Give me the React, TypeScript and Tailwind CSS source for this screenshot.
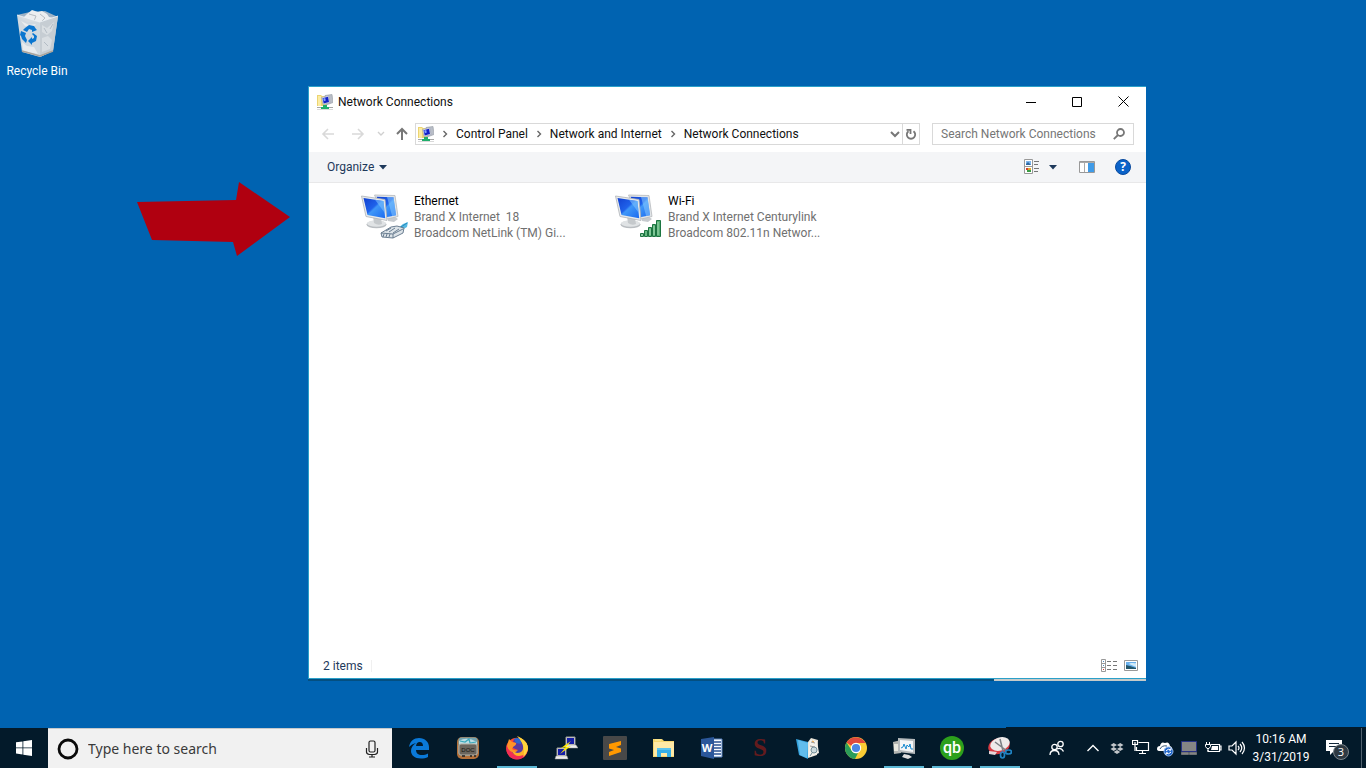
import type { ReactNode } from "react";

function FolderNetIcon() {
  return (
    <svg width="16" height="16" viewBox="0 0 16 16" aria-hidden="true" className="shrink-0">
      <path d="M0 1h4l1 1h5v10H0z" fill="#ecd471" />
      <path d="M1 2h3v10H1z" fill="#fbeca4" />
      <path d="M8 1.500 15 .5l1 8-7 2.500z" fill="#b9bec8" stroke="#9da3ab" strokeWidth=".7" />
      <path d="m4.500 3.500 7-2 1.500 7-7 2z" fill="#dfe3ee" stroke="#9aa0b4" strokeWidth=".6" />
      <path d="m5.500 4.200 5.500-1.500 1 5.300-5.300 1.600z" fill="#1220c8" />
      <path d="m6.200 4.500 2-.5.600 2.500-2 .7z" fill="#86a3ff" />
      <path d="M6 11h4v2h2v2H4v-2h2z" fill="#1fae6b" />
      <path d="M0 13.500h4M12 13.500h4" stroke="#a5a5a5" />
      <path d="M0 15.500h16" stroke="#d9d9d9" />
    </svg>
  );
}

function MonitorsIcon({ kind }: { kind: "wired" | "wifi" }) {
  const id = `screen-${kind}`;
  return (
    <svg width="48" height="48" viewBox="0 0 48 48" aria-hidden="true" className="shrink-0">
      <defs>
        <linearGradient id={id} x1="0" y1="0" x2="1" y2="1">
          <stop offset="0" stopColor="#1240d0" />
          <stop offset=".45" stopColor="#1f62ea" />
          <stop offset=".52" stopColor="#3f97f8" />
          <stop offset="1" stopColor="#1a6af0" />
        </linearGradient>
      </defs>
      <path d="m28 25 7-1 3 2-4 3-6-1z" fill="#c6cace" />
      <path d="M14.500 2 35 2.500l3 21-13 3z" fill="#e2e5e7" stroke="#b5b9bd" strokeWidth=".8" />
      <path d="m16.500 3.800 17 .4 2.600 18-10 2z" fill={`url(#${id})`} />
      <path d="m27 4 6.500.2 2.600 18-4 .8z" fill="#8fd0ff" opacity=".5" />
      <ellipse cx="16.500" cy="31.500" rx="10" ry="3.800" fill="#b9bdc1" />
      <ellipse cx="16.500" cy="30.500" rx="9.500" ry="3.300" fill="#e0e3e5" />
      <path d="m13 23 8 2 1 6q-4 2-8-1z" fill="#c5c9cc" />
      <path d="M1.500 3 25 6.500l2 21L6 23.500z" fill="#e7eaec" stroke="#aeb3b8" strokeWidth=".8" />
      <path d="m3.500 5 20 3 1.700 17.300L7.500 22z" fill={`url(#${id})`} />
      <path d="m15 6.700 8.500 1.300 1.300 12z" fill="#7cc0fb" opacity=".6" />
      {kind === "wired" ? (
        <g>
          <path d="m37 36 6-5 5-2-1 5-7 4z" fill="#56b9e2" />
          <path d="m41 34 6-4" stroke="#2488bd" />
          <path d="m21 40 10-6 6-1 7 2-1 5-10 5-11-1z" fill="#dce3e8" stroke="#5c7287" strokeWidth=".9" />
          <path d="m21 40 12 1 10-5M33 41v4" stroke="#5c7287" strokeWidth=".9" fill="none" />
          <path d="m24 41-1 3m4-3-1 3m4-3-1 3M26 38l5-3m-2 4 6-4m-2 5 6-4" stroke="#5c7287" strokeWidth=".9" />
        </g>
      ) : (
        <g stroke="#1c7541" strokeWidth="1">
          <path d="M26.500 40.500h3v3h-3z" fill="#8bc99f" />
          <path d="M30.500 37.500h3v6h-3z" fill="#66b982" />
          <path d="M34.500 34.500h3v9h-3z" fill="#62b67e" />
          <path d="M38.500 31.500h3v12h-3z" fill="#5cb37a" />
          <path d="M42.500 27.500h4v16h-4z" fill="#55ad72" />
          <path d="M44 29v13M40 33v9M36 36v6" stroke="#a3dbb3" />
        </g>
      )}
    </svg>
  );
}

function RecycleBin() {
  return (
    <svg width="48" height="50" viewBox="0 0 48 50" aria-hidden="true">
      <path d="m4 7 13-3 15-1 13 6-8 5H14z" fill="#9fb3c5" />
      <path d="m10 10 4-4 5-4 6 2 4-1 5 3 2 3 5 1-13 5z" fill="#eceef0" />
      <path d="m16 6 7 2-2 5M27 6l5 4-4 4" stroke="#b7bdc3" fill="none" />
      <path d="m4 7 23 7 18-6-5 35-13 6-18-5z" fill="#d9dee2" fillOpacity=".96" />
      <path d="m27 14 18-6-5 35-13 6z" fill="#c6cdd3" />
      <path d="m4 7 23 7 18-6" stroke="#eef3f7" strokeWidth=".8" fill="none" />
      <path d="m8 13 8 4 7-1-4 4-7-2zM9 34l5 4 7 1 4 7-15-3z" fill="#e9ecee" />
      <path d="m29 17 5 3 7-6-2 9-5 4-5-3zM29 30l6-2 4 4-2 9-8 3z" fill="#d9dee2" />
      <path d="m40 16-3 5m-6-1 3 5m-3 9 4 4" stroke="#b3bcc5" fill="none" />
      <path d="m9 43 18 5 13-5" stroke="#aaa49c" strokeWidth="1.500" fill="none" />
      <g fill="#0a76cf">
        <path d="m12 20 4-3 5 1 2 3 1 1-5 2v-2l-3-1-2 3-4-2z" />
        <path d="m8 23 5 2-1 3 2 4-1 3-4-4-1-3-1-1z" />
        <path d="m20 25 4 3-1 5-4 2v2l-4-4 4-4v2l2-1v-2l-2-2z" />
      </g>
    </svg>
  );
}

function TaskButton({ label, active, children }: { label: string; active?: boolean; children: ReactNode }) {
  return (
    <button aria-label={label} className="flex h-10 w-12 shrink-0 justify-center">
      <span className={`flex h-10 w-10 items-center justify-center ${active ? "shadow-[inset_0_-2px_#5cb8d5]" : ""}`}>
        <svg width="24" height="24" viewBox="0 0 24 24" aria-hidden="true">
          {children}
        </svg>
      </span>
    </button>
  );
}

function Tray({ label, children }: { label: string; children: ReactNode }) {
  return (
    <button aria-label={label} className="flex h-10 w-6 shrink-0 items-center justify-center">
      <svg width="18" height="18" viewBox="0 0 18 18" fill="none" stroke="#fff" aria-hidden="true">
        {children}
      </svg>
    </button>
  );
}

function Crumb({ children }: { children: string }) {
  return (
    <>
      <svg width="6" height="8" viewBox="0 0 6 8" className="mx-2 shrink-0" aria-hidden="true">
        <path d="m1.500 1 3 3-3 3" fill="none" stroke="#666" strokeWidth="1.400" />
      </svg>
      <button className="whitespace-nowrap">{children}</button>
    </>
  );
}

function Connection({ kind, name, network, device }: { kind: "wired" | "wifi"; name: string; network: string; device: string }) {
  return (
    <button className="flex w-[254px] items-start text-left">
      <MonitorsIcon kind={kind} />
      <span className="ml-[6px] min-w-0 leading-4 text-[#707070]">
        <span className="block text-black">{name}</span>
        <span className="block whitespace-pre">{network}</span>
        <span className="block whitespace-nowrap">{device}</span>
      </span>
    </button>
  );
}

function NetworkWindow() {
  return (
    <section
      aria-label="Network Connections"
      className="absolute left-[308px] top-[86px] flex h-[593px] w-[838px] flex-col border border-r-0 border-[#2ba0c9] bg-white font-['Roboto','Noto_Sans',sans-serif] text-[12px] text-[#101010]"
    >
      <header className="flex h-[29px] shrink-0 items-center pl-2">
        <FolderNetIcon />
        <h1 className="ml-[5px]">Network Connections</h1>
        <div className="ml-auto flex">
          <button aria-label="Minimize" className="flex h-[29px] w-[46px] items-center justify-center">
            <svg width="10" height="10"><path d="M0 5.500h10" stroke="#000" /></svg>
          </button>
          <button aria-label="Maximize" className="flex h-[29px] w-[46px] items-center justify-center">
            <svg width="10" height="10"><path d="M.5.500h9v9h-9z" fill="none" stroke="#000" /></svg>
          </button>
          <button aria-label="Close" className="flex h-[29px] w-[46px] items-center justify-center">
            <svg width="11" height="11"><path d="m.5.500 10 10m0-10-10 10" stroke="#000" /></svg>
          </button>
        </div>
      </header>

      <div className="flex h-9 shrink-0 items-center pr-3">
        <div className="flex w-[106px] shrink-0 items-center">
          <button aria-label="Back" className="ml-3">
            <svg width="14" height="14" fill="none" stroke="#d9d9d9" strokeWidth="1.600"><path d="M13 7H2m5-5L2 7l5 5" /></svg>
          </button>
          <button aria-label="Forward" className="ml-4">
            <svg width="14" height="14" fill="none" stroke="#d9d9d9" strokeWidth="1.600"><path d="M1 7h11M7 2l5 5-5 5" /></svg>
          </button>
          <button aria-label="Recent locations" className="ml-3">
            <svg width="8" height="6" fill="none" stroke="#d0d0d0" strokeWidth="1.400"><path d="m1 1 3 3 3-3" /></svg>
          </button>
          <button aria-label="Up" className="ml-[11px]">
            <svg width="12" height="14" fill="none" stroke="#777" strokeWidth="2"><path d="M6 13V2M1 7l5-5 5 5" /></svg>
          </button>
        </div>
        <nav aria-label="Address" className="flex h-[22px] min-w-0 flex-1 items-center border border-[#d9d9d9] pl-[2px]">
          <FolderNetIcon />
          <Crumb>Control Panel</Crumb>
          <Crumb>Network and Internet</Crumb>
          <Crumb>Network Connections</Crumb>
          <button aria-label="Previous locations" className="ml-auto mr-[2px]">
            <svg width="10" height="8" fill="none" stroke="#777" strokeWidth="2"><path d="m1 2 4 4 4-4" /></svg>
          </button>
          <button aria-label="Refresh" className="flex h-5 w-[17px] items-center justify-center border-l border-[#d9d9d9]">
            <svg width="12" height="12" fill="none" stroke="#777" strokeWidth="1.800">
              <path d="M8.500 3.200A4.200 4.200 0 1 1 3.500 3.200M1.500 1.900h4v4" />
            </svg>
          </button>
        </nav>
        <label className="ml-3 flex h-[22px] w-[202px] shrink-0 items-center border border-[#d9d9d9] px-2">
          <input
            aria-label="Search Network Connections"
            placeholder="Search Network Connections"
            className="min-w-0 flex-1 outline-none placeholder:text-[#767676]"
          />
          <svg width="12" height="12" fill="none" stroke="#777" strokeWidth="1.800" aria-hidden="true">
            <circle cx="7.500" cy="4.500" r="3.500" /><path d="M5 7 .8 11.200" />
          </svg>
        </label>
      </div>

      <div className="flex h-[31px] shrink-0 items-center border-b border-[#e8e8e9] bg-[#f4f5f7] pl-[18px] pr-[15px]">
        <button className="flex items-center text-[#1e395b]">
          Organize
          <svg width="8" height="5" className="ml-[5px]"><path d="M0 0h8L4 4.500z" fill="#1e395b" /></svg>
        </button>
        <button aria-label="Change your view" className="ml-auto">
          <svg width="16" height="16" viewBox="0 0 16 16">
            <path d="M.5.500h8v14h-8zM.5 7.500h8" fill="#fff" stroke="#999" />
            <path d="M2 2h5v4H2z" fill="#7eb6ed" /><path d="m2 5 2-2 3 3H2z" fill="#2c68a3" />
            <path d="M2 9h2v2H2z" fill="#d04032" /><path d="M4 9h3v2H4z" fill="#e0a92b" /><path d="M3 11h4v2H3z" fill="#3a9d43" />
            <path d="M10 2.500h5M10 5.500h4M10 9.500h5M10 12.500h4" stroke="#777" />
          </svg>
        </button>
        <button aria-label="More view options" className="ml-[9px]">
          <svg width="8" height="5"><path d="M0 0h8L4 4.500z" fill="#1e395b" /></svg>
        </button>
        <button aria-label="Preview pane" className="ml-[22px]">
          <svg width="16" height="12">
            <path d="M.5.500h15v11H.5z" fill="#fff" stroke="#999" /><path d="M1 1.500h14M5.500 2v9" stroke="#aaa" />
            <path d="M9 2h6v9H9z" fill="#3f9be8" />
          </svg>
        </button>
        <button aria-label="Help" className="ml-5">
          <svg width="16" height="16">
            <circle cx="8" cy="8" r="7.500" fill="#0b63c9" stroke="#0a4a9d" />
            <text x="8" y="12" textAnchor="middle" fontSize="12" fontWeight="700" fontFamily="Open Sans, sans-serif" fill="#fff">?</text>
          </svg>
        </button>
      </div>

      <main className="flex flex-1 items-start pl-[51px] pt-[10px]">
        <Connection kind="wired" name="Ethernet" network="Brand X Internet  18" device="Broadcom NetLink (TM) Gi..." />
        <Connection kind="wifi" name="Wi-Fi" network="Brand X Internet Centurylink" device="Broadcom 802.11n Networ..." />
      </main>

      <footer className="flex h-[25px] shrink-0 items-center pl-[14px] pr-2 text-[#1e395b]">
        <span>2 items</span>
        <span className="ml-2 h-3 w-px bg-[#f0f0f0]" />
        <button aria-label="Details view" className="ml-auto">
          <svg width="16" height="13">
            <path d="M.5.500h4v12h-4zM.5 4.500h4M.5 8.500h4" fill="#fff" stroke="#999" />
            <path d="M6 2.500h4m2 0h4M6 6.500h4m2 0h4M6 10.500h4m2 0h4" stroke="#777" />
            <path d="M2 2h1v1H2zM2 6h1v1H2z" fill="#4b8bc0" /><path d="M2 10h1v1H2z" fill="#d33" />
          </svg>
        </button>
        <button aria-label="Large icons view" className="ml-[7px]">
          <svg width="14" height="11">
            <path d="M.5.500h13v10H.5z" fill="#fff" stroke="#999" />
            <path d="M2 2h10v7H2z" fill="#69b0ed" /><path d="M5 4c2-2 5 0 7-1v4z" fill="#d3ebf8" /><path d="m2 5 4 1 6 2v1H2z" fill="#24566a" />
          </svg>
        </button>
      </footer>
      <div className="absolute -left-px top-full mt-px flex h-[2px] w-[838px]">
        <span className="flex-1 bg-[#044f80]" />
        <span className="w-[152px] bg-[#c6cac9]" />
      </div>
    </section>
  );
}

function Taskbar() {
  return (
    <footer className="relative flex h-10 shrink-0 items-center bg-[#031a2a] text-white">
      <button aria-label="Start" className="flex h-10 w-12 shrink-0 items-center justify-center">
        <svg width="16" height="16" viewBox="0 0 16 16" fill="#fff">
          <path d="m0 2.300 6.500-.9v6.100H0zM7.300 1.300 16 0v7.500H7.300zM0 8.300h6.500v6.200L0 13.600zM7.300 8.300H16V16l-8.700-1.300z" />
        </svg>
      </button>
      <label className="flex h-10 w-[344px] shrink-0 items-center border-t border-[#c5c9cc] bg-[#f1f1f1] pl-2 pr-3">
        <svg width="24" height="24" aria-hidden="true" className="shrink-0">
          <circle cx="12" cy="12" r="9" fill="none" stroke="#0a0a0a" strokeWidth="2.800" />
        </svg>
        <input
          aria-label="Type here to search"
          placeholder="Type here to search"
          className="ml-2 min-w-0 flex-1 font-['Noto_Sans',sans-serif] text-[14px] text-[#333] outline-none placeholder:text-[#3a3a3a]"
        />
        <svg width="16" height="18" fill="none" stroke="#222" strokeWidth="1.200" aria-hidden="true">
          <rect x="5" y="1" width="6" height="11" rx="1.500" /><path d="M2.500 8v4q0 2 3 2.500h5q3-.5 3-2.500V8M8 14.500V17M5 17h6" />
        </svg>
      </label>

      <div className="ml-[3px] flex shrink-0 gap-px">
        <TaskButton label="Edge">
          <path d="M2 11C3 5 7 2 12 2c6 0 10 4 10 9v3H9c0 3 2 5 6 5 2 0 4-.6 6-1.600V21c-2 1-4.500 1.500-7 1.500C7.500 22.500 4 19 4 15c0-3 1.500-6 5-8-3 .7-5 2-7 4z" fill="#0a79d8" />
          <path d="M9 10h7c0-2.500-1.200-4-3.300-4S9.300 7.600 9 10z" fill="#031a2a" />
        </TaskButton>
        <TaskButton label="Document manager">
          <rect x="1" y="1" width="22" height="22" rx="5" fill="#b5713a" />
          <rect x="2.500" y="1.500" width="19" height="18" rx="3" fill="#72a3b0" />
          <path d="M3 5q8-5 18 1v3H3z" fill="#b9dde4" /><path d="m4 5 5 1 4-3 1 4 6-1" stroke="#3aa9bb" strokeWidth="1.200" fill="none" />
          <rect x="3" y="8" width="18" height="11" rx="2" fill="#6b665e" stroke="#b5aea2" />
          <text x="12" y="16" textAnchor="middle" fontSize="6" fontFamily="Liberation Sans, sans-serif" fill="#15140f">DOC</text>
          <path d="M6 20h3m5 0h2m2 0h2" stroke="#222" strokeWidth="1.500" />
        </TaskButton>
        <TaskButton label="Firefox" active>
          <circle cx="12" cy="12.500" r="10.800" fill="#ff4a2e" />
          <path d="M2 8Q0 16 5 21q7 5 14 0 4-4 4-9-2 8-9 8-7 0-9-7z" fill="#f22c56" />
          <path d="M9 3q5-2 9 2 4 4 2 9-2 5-8 5-5-1-6-5l3 1 4-1-5-2-1-3 4-2-3-1z" fill="#5b3aa0" />
          <path d="M9 3q4-2 7 0v5l-5-1z" fill="#2c66cf" />
          <path d="M12 0q3 2 4 5 3 3 2 8-1 4-6 4l-5-2q2 5 7 5 8-1 9-8-1-6-6-9z" fill="#ffb227" />
          <path d="m12 0 4 2q7 4 7 11-1 5-5 8 2-5 0-11-1-5-6-10z" fill="#ffd43b" />
          <path d="m4 3 3 3 4 1q1 2-3 4l-1 2q3 2 6 1-2 3-6 2-4-2-5-6z" fill="#ff9428" />
        </TaskButton>
        <TaskButton label="PuTTY">
          <path d="M12 1h9v8h-9zM3 12h9v8H3z" fill="#ddd" stroke="#999" />
          <path d="M13 2h7v6h-7zM4 13h7v6H4z" fill="#141da8" />
          <path d="M11 9h11l2 3H12zM2 20h11l1 3H1z" fill="#eee" stroke="#999" strokeWidth=".5" />
          <path d="m17 5-10 7 5-1-6 7 11-8-5 1z" fill="#ffe900" />
        </TaskButton>
        <TaskButton label="Sublime Text">
          <rect width="24" height="24" rx="1" fill="#484848" />
          <path d="m6 8 12-3v4l-5 2 5 1.500V16L6 20v-4l5-2-5-1.500z" fill="#ff9800" />
        </TaskButton>
        <TaskButton label="File Explorer">
          <path d="M1 3h9l2 2h10v16H1z" fill="#f5d66f" /><path d="M2 6h20v14H2z" fill="#ffe9a6" />
          <path d="M5 12h14v9h-4v-4H9v4H5z" fill="#35aee8" /><path d="M5 12h14v2H5z" fill="#5bc3ee" /><path d="M3 4h6" stroke="#fff0a9" />
        </TaskButton>
      </div>
      <div className="flex shrink-0">
        <TaskButton label="Word">
          <path d="M11 3h11v18H11z" fill="#f8fbff" stroke="#527dba" />
          <path d="M14 6h7M14 9h7M14 12h7M14 15h7M14 18h7" stroke="#285293" strokeWidth="1.300" />
          <path d="m1 3 13-2v22L1 20z" fill="#2b579a" />
          <text x="7" y="16" textAnchor="middle" fontSize="11" fontWeight="700" fontFamily="Open Sans, sans-serif" fill="#fff">W</text>
        </TaskButton>
        <TaskButton label="Scrivener">
          <text x="12" y="20" textAnchor="middle" fontSize="25" fontWeight="700" fontFamily="Liberation Serif, serif" fill="#641b1d">S</text>
        </TaskButton>
        <TaskButton label="Notebook">
          <path d="m0 3 12 3v17l-9-4z" fill="#35a3dd" /><path d="m2 4 10 3-1 15-7-3z" fill="#62bdec" />
          <path d="m12 6 3-4 7 2-1 15-9 3z" fill="#e9e4d8" /><path d="m14 4 7 1 2 12-9 4-2-1z" fill="#f4f1ea" />
          <path d="m15 6 4 1m-5 3 5 1" stroke="#999" /><path d="m16 5 2 1" stroke="#e49b35" />
          <circle cx="18" cy="14" r="3" fill="#cbd9dc" stroke="#759099" /><path d="m16 17-2 3" stroke="#759099" />
        </TaskButton>
        <TaskButton label="Chrome">
          <circle cx="12" cy="12" r="11" fill="#fbcc34" />
          <path d="M2.500 6.500A11 11 0 0 1 21.500 7H12a5 5 0 0 0-4.500 3z" fill="#df493d" />
          <path d="M2.500 6.500 8 15q2 3 6 2l-3 6A11 11 0 0 1 2.500 6.500z" fill="#2b9d5a" />
          <circle cx="12" cy="12" r="5.200" fill="#fff" /><circle cx="12" cy="12" r="4.100" fill="#4b87e5" />
        </TaskButton>
        <TaskButton label="Performance monitor" active>
          <path d="m1 6 8-2v13l-7 1z" fill="#b4b5b1" /><path d="M2 8h7v7H2z" fill="#e9e8df" />
          <path d="m6 2 17 1v15L6 16z" fill="#b6babc" /><path d="m8 4 13 1v11L8 14z" fill="#f4f6f7" />
          <path d="m9 12 2-1 1-3 2 5 1-4 2 2 1-3 1 5h2" fill="none" stroke="#198ad0" />
          <path d="m12 18 5 1 3 2-4 2-6-2z" fill="#ddd" />
        </TaskButton>
        <TaskButton label="QuickBooks" active>
          <circle cx="12" cy="12" r="12" fill="#2ca01c" />
          <text x="12" y="17" textAnchor="middle" fontSize="16" fontWeight="500" fontFamily="Roboto, sans-serif" fill="#fff">qb</text>
        </TaskButton>
        <TaskButton label="Snipping Tool" active>
          <ellipse cx="11" cy="10" rx="11" ry="8" transform="rotate(-18 11 10)" fill="#d93b43" />
          <ellipse cx="12" cy="8" rx="10" ry="6.500" transform="rotate(-18 12 8)" fill="#eeeaea" />
          <path d="m12 3 3 12M7 6l12 9" stroke="#7b7f84" strokeWidth="1.500" />
          <path d="m1 15 8 1-2 3-6-1z" fill="#e5d6d7" />
          <g fill="none" stroke="#2185c5" strokeWidth="1.700"><ellipse cx="14.500" cy="19" rx="2" ry="3" /><ellipse cx="20.500" cy="16" rx="3" ry="2" /></g>
        </TaskButton>
      </div>

      <div className="ml-auto flex shrink-0 items-center">
        <button aria-label="People" className="flex h-10 w-12 items-center justify-center">
          <svg width="16" height="16" fill="none" stroke="#fff" strokeWidth="1.300">
            <circle cx="5.500" cy="7" r="2.700" /><path d="M1 15q0-4.500 4.500-4.500T10 15M8 9q4-2 6.500 2.500" /><circle cx="11.500" cy="4" r="2.700" />
          </svg>
        </button>
        <Tray label="Show hidden icons"><path d="m3.500 12 5.500-5.500 5.500 5.500" strokeWidth="1.400" /></Tray>
        <Tray label="Dropbox">
          <path d="m2.500 6 3.200-2L9 6 5.700 8zM9 6l3.200-2 3.300 2-3.300 2zM2.500 10l3.200-2L9 10l-3.300 2zM9 10l3.200-2 3.300 2-3.300 2zM5.700 13 9 11l3.200 2L9 15z" fill="#c2c6ca" stroke="none" />
        </Tray>
        <Tray label="Network">
          <path d="M6.500 3.500h10v8h-12V8M10.500 11.500v3M7 14.500h7M.5 1.500h5v4h-5zM3 3v9" strokeWidth="1.200" />
        </Tray>
        <Tray label="OneDrive">
          <path d="M1 10q0-3 3-3 1-5 5-3 4-2 5 3 3 1 2 5H4q-3 0-3-2z" fill="#fff" stroke="none" />
          <path d="M4 10q2-4 7-3" stroke="#34536f" /><circle cx="12.500" cy="12.500" r="4.500" fill="#2468ca" stroke="#8fb7ed" />
          <path d="M10 12q2-3 5-1m0-2v2h-2m2 2q-2 3-5 1m0 2v-2h2" strokeWidth="1" />
        </Tray>
        <Tray label="Touchpad">
          <path d="M1.500 2.500h15v10h-15z" fill="#858585" stroke="#273185" /><path d="M1.500 13.500h7v2h-7zM9.500 13.500h7v2h-7z" fill="#858585" stroke="#6f7275" />
        </Tray>
        <Tray label="Battery">
          <path d="M7 5.500h8.500v7H4V11m11.500-4h1.500v4h-1.500" strokeWidth="1.200" /><path d="M8 7h6v4H7z" fill="#fff" stroke="none" />
          <path d="M2.500 3v2M5.500 3v2M1.500 5.500h5v2l-1.500 2H3l-1.500-2zM4 10v2" />
        </Tray>
        <Tray label="Volume">
          <path d="M1 7h3l4-4v12l-4-4H1zM10 7q2 2 0 4m2-6q3.500 4 0 8m2-10q5 6 0 12" strokeWidth="1.200" />
        </Tray>
        <time className="w-16 text-center font-['Roboto','Noto_Sans',sans-serif] text-[12px] leading-[18px]">
          10:16 AM
          <br />
          3/31/2019
        </time>
        <button aria-label="3 notifications" className="flex h-10 w-12 items-center justify-center">
          <svg width="24" height="24">
            <path d="M1 4h16v11H9l-4 4v-4H1z" fill="#fff" /><path d="M4 7.500h10M4 10.500h10" stroke="#14283a" />
            <circle cx="16" cy="16" r="7.500" fill="#2e3942" stroke="#7c858b" />
            <text x="16" y="20" textAnchor="middle" fontSize="11" fontFamily="Open Sans, sans-serif" fill="#fff">3</text>
          </svg>
        </button>
        <button aria-label="Show desktop" className="h-10 w-[5px] border-l border-[#50616e]" />
      </div>
      <span className="absolute bottom-full right-0 h-px w-[360px] bg-[#031a2a]" />
    </footer>
  );
}

export default function App() {
  return (
    <div className="flex min-h-screen flex-col bg-[#0063b1] font-['Roboto','Noto_Sans',sans-serif]">
      <div className="relative flex-1 overflow-hidden">
        <button className="absolute left-0 top-2 flex w-[74px] flex-col items-center text-[12px] leading-4 text-white">
          <RecycleBin />
          <span className="mt-[5px]">Recycle Bin</span>
        </button>
        <svg className="absolute left-[137px] top-[182px]" width="153" height="75" aria-hidden="true">
          <path d="m0 20 99-2 3-18 51 35-53 39-4-14-81-2z" fill="#b00010" />
        </svg>
        <NetworkWindow />
      </div>
      <Taskbar />
    </div>
  );
}
